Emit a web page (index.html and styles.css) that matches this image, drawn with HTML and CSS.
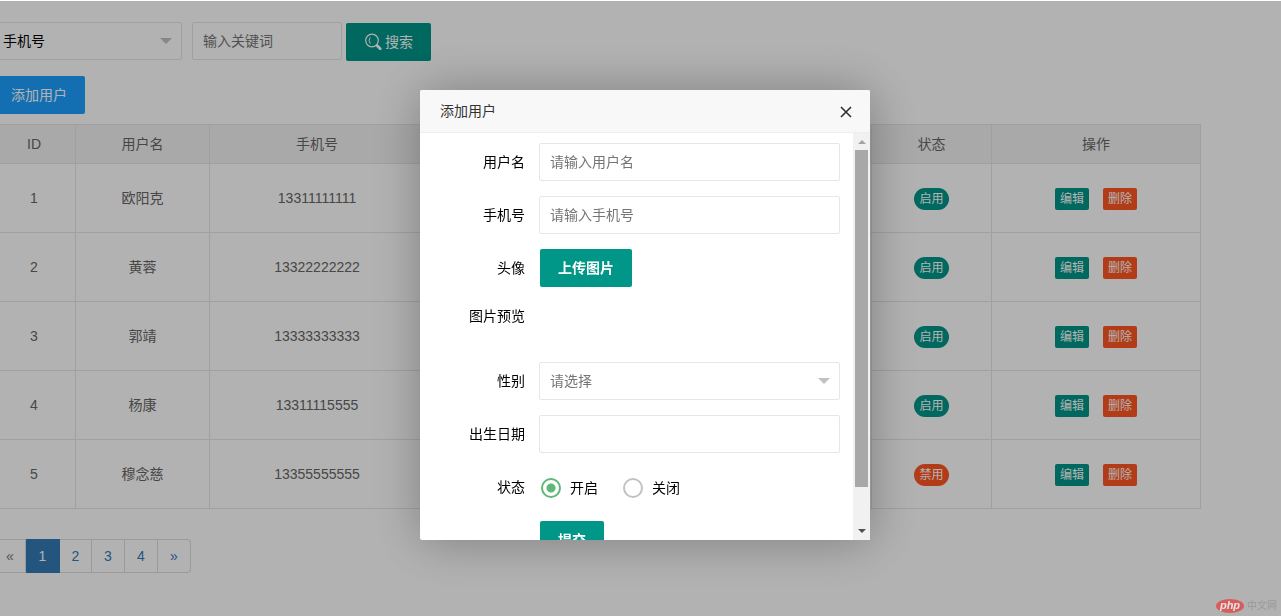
FILE: index.html
```html
<!DOCTYPE html>
<html lang="zh-CN">
<head>
<meta charset="utf-8">
<title>添加用户</title>
<link rel="stylesheet" href="styles.css">
</head>
<body>
<main class="page">
  <form class="search">
    <div class="select-wrap search-field">
      <select class="control" aria-label="搜索字段"><option>手机号</option></select>
    </div>
    <input class="control keyword" type="text" placeholder="输入关键词" aria-label="输入关键词">
    <button class="btn btn-search" type="button">
      <svg class="icon" viewBox="0 0 18 18" aria-hidden="true"><circle cx="8" cy="7.5" r="6.3" fill="none" stroke="currentColor" stroke-width="1.2"/><path d="M6.2 4.4Q4 7.4 6.2 10.6" fill="none" stroke="currentColor"/><path d="M13.2 12.8l3 3" stroke="currentColor" stroke-width="2.8" stroke-linecap="round"/></svg>
      搜索
    </button>
  </form>
  <button class="btn btn-blue" type="button">添加用户</button>

  <table class="users">
    <colgroup><col class="c-id"><col class="c-name"><col class="c-phone"><col><col class="c-state"><col class="c-ops"></colgroup>
    <thead>
      <tr><th>ID</th><th>用户名</th><th>手机号</th><th></th><th>状态</th><th>操作</th></tr>
    </thead>
    <tbody>
      <tr><td>1</td><td>欧阳克</td><td>13311111111</td><td></td><td><div class="ops"><button class="tag round" type="button">启用</button></div></td><td><div class="ops"><button class="tag" type="button">编辑</button><button class="tag danger" type="button">删除</button></div></td></tr>
      <tr><td>2</td><td>黄蓉</td><td>13322222222</td><td></td><td><div class="ops"><button class="tag round" type="button">启用</button></div></td><td><div class="ops"><button class="tag" type="button">编辑</button><button class="tag danger" type="button">删除</button></div></td></tr>
      <tr><td>3</td><td>郭靖</td><td>13333333333</td><td></td><td><div class="ops"><button class="tag round" type="button">启用</button></div></td><td><div class="ops"><button class="tag" type="button">编辑</button><button class="tag danger" type="button">删除</button></div></td></tr>
      <tr><td>4</td><td>杨康</td><td>13311115555</td><td></td><td><div class="ops"><button class="tag round" type="button">启用</button></div></td><td><div class="ops"><button class="tag" type="button">编辑</button><button class="tag danger" type="button">删除</button></div></td></tr>
      <tr><td>5</td><td>穆念慈</td><td>13355555555</td><td></td><td><div class="ops"><button class="tag round danger" type="button">禁用</button></div></td><td><div class="ops"><button class="tag" type="button">编辑</button><button class="tag danger" type="button">删除</button></div></td></tr>
    </tbody>
  </table>

  <nav class="pager">
    <span class="page-item muted">«</span>
    <span class="page-item active">1</span>
    <a class="page-item" href="#2">2</a>
    <a class="page-item" href="#3">3</a>
    <a class="page-item" href="#4">4</a>
    <a class="page-item" href="#next">»</a>
  </nav>
</main>

<div class="shade">
  <section class="dialog" role="dialog" aria-labelledby="dialog-title">
    <header class="dialog-head">
      <span id="dialog-title">添加用户</span>
      <button class="close" type="button" aria-label="关闭"><svg viewBox="0 0 12 12" aria-hidden="true"><path d="M1 1l10 10M11 1L1 11" fill="none" stroke="#2e2d3c" stroke-width="1.6"/></svg></button>
    </header>
    <div class="dialog-body">
      <form class="form">
        <div class="row"><label class="label" for="name">用户名</label><input class="control grow" id="name" type="text" placeholder="请输入用户名"></div>
        <div class="row"><label class="label" for="phone">手机号</label><input class="control grow" id="phone" type="text" placeholder="请输入手机号"></div>
        <div class="row"><label class="label" for="upload">头像</label><button class="btn strong" id="upload" type="button">上传图片</button></div>
        <div class="row preview"><span class="label">图片预览</span></div>
        <div class="row"><label class="label" for="sex">性别</label><div class="select-wrap grow"><select class="control hint" id="sex"><option>请选择</option></select></div></div>
        <div class="row"><label class="label" for="birth">出生日期</label><input class="control grow" id="birth" type="text"></div>
        <div class="row"><span class="label">状态</span>
          <div class="radios">
            <label class="radio"><input type="radio" name="state" checked>开启</label>
            <label class="radio"><input type="radio" name="state">关闭</label>
          </div>
        </div>
        <div class="row"><span class="label"></span><button class="btn strong" type="button">提交</button></div>
      </form>
      <div class="scrollbar" aria-hidden="true">
        <span class="arrow up"></span><span class="thumb"></span><span class="arrow down"></span>
      </div>
    </div>
  </section>
</div>

<div class="watermark"><span class="php">php</span><span class="site">中文网</span></div>
</body>
</html>
```
FILE: styles.css
```css
* { box-sizing: border-box; }

body {
  margin: 0;
  background: #fff;
  color: #000;
  font: 14px/24px "Liberation Sans", "Noto Sans CJK SC", sans-serif;
  overflow: hidden;
}

button, input, select { font: inherit; margin: 0; }

.page { margin-left: -8px; padding: 22px 80px 0 0; }

.search { display: flex; margin-bottom: 15px; }
.search-field { width: 190px; margin-right: 10px; }
.keyword { width: 150px; margin-right: 4px; }

.control {
  display: block;
  height: 38px;
  padding: 0 10px;
  border: 1px solid #e6e6e6;
  border-radius: 2px;
  background: #fff;
  color: #000;
  appearance: none;
  outline: none;
}
.control::placeholder { color: #757575; opacity: 1; }
.control.hint { color: #757575; }

.select-wrap { position: relative; }
.select-wrap .control { width: 100%; }
.select-wrap::after {
  content: "";
  position: absolute;
  top: 16px;
  right: 10px;
  border: 6px solid transparent;
  border-top-color: #c2c2c2;
  border-bottom-width: 0;
}

.btn {
  display: flex;
  align-items: center;
  height: 38px;
  padding: 0 18px;
  border: 0;
  border-radius: 2px;
  background: #009688;
  color: #fff;
  white-space: nowrap;
}
.btn-search { margin-top: 1px; gap: 3px; }
.btn-blue { background: #1e9fff; padding-left: 19px; }
.strong { font-weight: 700; margin-left: 1px; }
.icon { width: 18px; height: 18px; }

.users {
  width: 100%;
  margin-top: 10px;
  border-collapse: collapse;
  table-layout: fixed;
  color: #666;
  text-align: center;
}
.users th, .users td { border: 1px solid #e6e6e6; padding: 0; }
.users th { height: 39px; background: #f2f2f2; font-weight: 400; }
.users td { height: 69px; }
.c-id { width: 83px; }
.c-name { width: 134px; }
.c-phone { width: 215px; }
.c-state { width: 120px; }
.c-ops { width: 209px; }

.ops { display: flex; justify-content: center; gap: 14px; padding-top: 2px; }
.tag {
  height: 22px;
  padding: 0 5px;
  border: 0;
  border-radius: 2px;
  background: #009688;
  color: #fff;
  font-size: 12px;
  line-height: 22px;
}
.tag.round { border-radius: 11px; }
.tag.danger { background: #ff5722; }

.pager { display: flex; margin-top: 30px; }
.page-item {
  width: 33px;
  height: 34px;
  border: 1px solid #ddd;
  border-left: 0;
  color: #337ab7;
  line-height: 32px;
  text-align: center;
  text-decoration: none;
}
.page-item:first-child { width: 34px; padding-left: 3px; }
.page-item:last-child { border-radius: 0 4px 4px 0; }
.page-item.muted { color: #777; }
.page-item.active { width: 34px; background: #337ab7; border-color: #337ab7; color: #fff; }
.page-item.active + .page-item { width: 32px; }

.shade {
  position: fixed;
  inset: 1px 0 0 0;
  display: flex;
  justify-content: center;
  align-items: flex-start;
  padding: 89px 0 0 9px;
  background: rgba(0, 0, 0, .3);
}

.dialog {
  width: 450px;
  border-radius: 2px;
  background: #fff;
  box-shadow: 1px 1px 50px rgba(0, 0, 0, .3);
}
.dialog-head {
  display: flex;
  align-items: center;
  justify-content: space-between;
  height: 43px;
  padding: 0 18px 0 20px;
  border-bottom: 1px solid #eee;
  border-radius: 2px 2px 0 0;
  background: #f8f8f8;
  color: #333;
}
.close { display: flex; padding: 2px 0 0; border: 0; background: none; }
.close svg { width: 12px; height: 12px; }

.dialog-body { display: flex; height: 407px; overflow: hidden; }
.form {
  flex: 1;
  display: flex;
  flex-direction: column;
  gap: 15px;
  padding: 10px 13px 0 9px;
}
.row { display: flex; flex: none; min-height: 38px; }
.label { width: 110px; padding-right: 14px; line-height: 38px; text-align: right; }
.grow { flex: 1; min-width: 0; }
.preview { height: 50px; margin-top: -5px; }

.radios { display: flex; gap: 25px; padding: 1px 0 0 2px; }
.radio { display: flex; align-items: center; gap: 9px; }
.radio input {
  appearance: none;
  width: 20px;
  height: 20px;
  border: 2px solid #c2c2c2;
  border-radius: 50%;
}
.radio input:checked {
  border-color: #5fb878;
  background: radial-gradient(circle, #5fb878 4px, transparent 5px);
}

.scrollbar {
  display: flex;
  flex-direction: column;
  align-items: center;
  width: 17px;
  padding: 7px 0;
  background: #f1f1f1;
}
.thumb { width: 13px; height: 337px; margin: 6px 0 auto; background: #a8a8a8; }
.arrow { border: 4px solid transparent; }
.arrow.up { border-top: 0; border-bottom-color: #a3a3a3; }
.arrow.down { border-bottom: 0; border-top-color: #505050; }

.watermark {
  position: fixed;
  right: 4px;
  bottom: 3px;
  display: flex;
  align-items: center;
  gap: 3px;
  font-size: 10px;
  line-height: 14px;
}
.php {
  width: 28px;
  height: 14px;
  border-radius: 50%;
  background: #d95c5c;
  color: #e4e4e4;
  font-size: 11px;
  font-style: italic;
  font-weight: 700;
  line-height: 12px;
  text-align: center;
}
.site { color: #999; }
```
